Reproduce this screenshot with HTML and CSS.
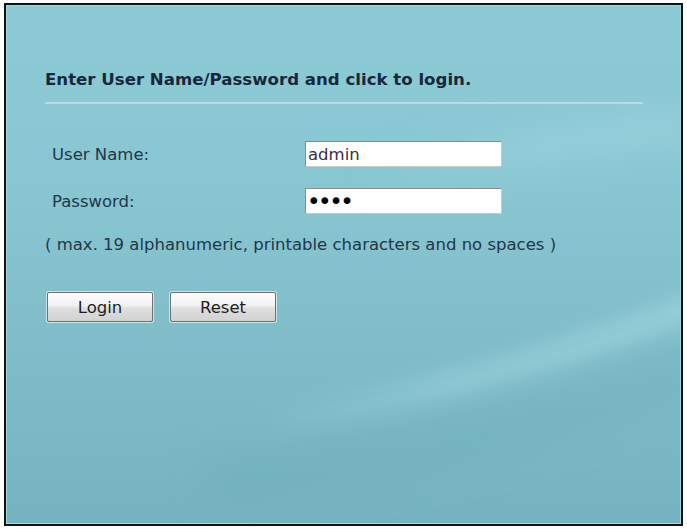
FILE: index.html
```html
<!DOCTYPE html>
<html>
<head>
<meta charset="utf-8">
<link rel="stylesheet" href="styles.css">
</head>
<body>
<div class="frame">
  <div class="panel">
    <svg class="waves" width="673" height="517" viewBox="0 0 673 517" aria-hidden="true">
      <defs>
        <filter id="soft" x="-20%" y="-50%" width="140%" height="200%">
          <feGaussianBlur stdDeviation="10"/>
        </filter>
        <filter id="softer" x="-20%" y="-50%" width="140%" height="200%">
          <feGaussianBlur stdDeviation="18"/>
        </filter>
        <linearGradient id="fadeIn" x1="0" y1="0" x2="1" y2="0">
          <stop offset="0" stop-color="#a6dbe5" stop-opacity="0"/>
          <stop offset="0.45" stop-color="#a6dbe5" stop-opacity="0.45"/>
          <stop offset="1" stop-color="#a6dbe5" stop-opacity="0.6"/>
        </linearGradient>
        <linearGradient id="fadeTop" x1="0" y1="0" x2="1" y2="0">
          <stop offset="0" stop-color="#a3d8e2" stop-opacity="0"/>
          <stop offset="0.5" stop-color="#a3d8e2" stop-opacity="0.45"/>
          <stop offset="1" stop-color="#a3d8e2" stop-opacity="0.5"/>
        </linearGradient>
      </defs>
      <path d="M 360 180 Q 520 135 690 120" fill="none" stroke="url(#fadeTop)" stroke-width="36" filter="url(#softer)"/>
      <path d="M 250 415 Q 450 390 690 300" fill="none" stroke="url(#fadeIn)" stroke-width="24" filter="url(#soft)"/>
      <path d="M 200 475 Q 440 455 690 365" fill="none" stroke="#6aa9b6" stroke-opacity="0.3" stroke-width="50" filter="url(#softer)"/>
    </svg>
    <div class="content">
      <h1 class="title">Enter User Name/Password and click to login.</h1>
      <div class="divider"></div>
      <div class="form-grid">
        <label class="label" for="user">User Name:</label>
        <input class="field" id="user" type="text" value="admin">
        <label class="label" for="pass">Password:</label>
        <input class="field field-pass" id="pass" type="password" value="1234">
      </div>
      <p class="hint">( max. 19 alphanumeric, printable characters and no spaces )</p>
      <div class="buttons">
        <button class="btn" type="button">Login</button>
        <button class="btn" type="button">Reset</button>
      </div>
    </div>
  </div>
</div>
</body>
</html>
```
FILE: styles.css
```css
html, body {
  margin: 0;
  padding: 0;
  background: #ffffff;
}
body {
  font-family: "DejaVu Sans", sans-serif;
  width: 687px;
  height: 529px;
  overflow: hidden;
}
.frame {
  margin: 3px 0 0 4px;
  width: 679px;
  height: 523px;
  box-sizing: border-box;
  border: 2px solid #111;
  background: #111;
}
.panel {
  position: relative;
  height: 100%;
  box-sizing: border-box;
  border: 1px solid #a6d6df;
  overflow: hidden;
  color: #1f3343;
  background: linear-gradient(180deg, #8ccad6 0%, #88c6d2 35%, #80bdc9 65%, #75b3c0 100%);
}
.waves {
  position: absolute;
  left: 0;
  top: 0;
}
.content {
  position: relative;
  padding: 64px 37px 0 38px;
}
.title {
  margin: 0;
  font-size: 16.6px;
  font-weight: bold;
  line-height: 20px;
  color: #17283a;
}
.divider {
  margin-top: 12px;
  height: 2px;
  background: #b4dde5;
}
.form-grid {
  display: grid;
  grid-template-columns: 253px 197px;
  grid-auto-rows: 26px;
  row-gap: 21px;
  align-items: center;
  margin-top: 37px;
  padding-left: 7px;
}
.label {
  font-size: 16.5px;
  color: #22364a;
}
.field {
  width: 197px;
  height: 26px;
  box-sizing: border-box;
  margin: 0;
  border: 1px solid #8b8b8b;
  border-right-color: #c8c8c8;
  border-bottom-color: #c8c8c8;
  background: #ffffff;
  padding: 0 2px;
  font-family: "DejaVu Sans", sans-serif;
  font-size: 16.5px;
  color: #3a3040;
  outline: none;
}
.field-pass {
  font-size: 23px;
  letter-spacing: -2.5px;
  padding-left: 1px;
  color: #000000;
}
.hint {
  margin: 21px 0 0;
  font-size: 16.5px;
  line-height: 20px;
  color: #22364a;
}
.buttons {
  display: flex;
  gap: 17px;
  margin-top: 37px;
  padding-left: 2px;
}
.btn {
  width: 106px;
  height: 30px;
  margin: 0;
  padding: 0;
  box-sizing: border-box;
  border: 1px solid #6f6f6f;
  border-radius: 2px;
  box-shadow: 0 0 0 1px #c9e6ec;
  background: linear-gradient(180deg, #fdfdfd 0%, #f0f0f0 45%, #dedede 55%, #d2d2d2 100%);
  font-family: "DejaVu Sans", sans-serif;
  font-size: 16.5px;
  color: #1e1e1e;
}
```
